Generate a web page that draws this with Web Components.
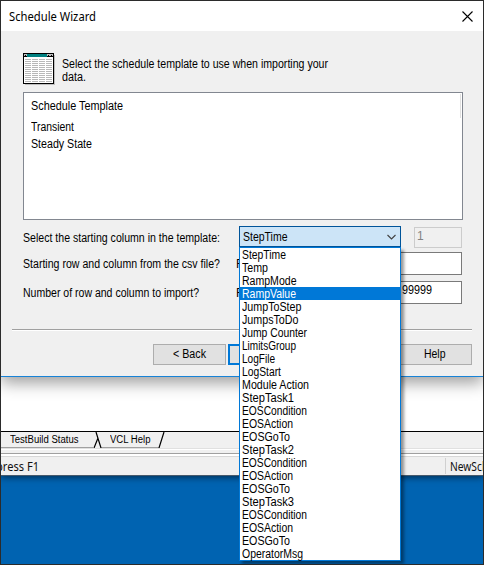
<!DOCTYPE html>
<html lang="en"><head><meta charset="utf-8"><title>Schedule Wizard</title>
<style>html,body{margin:0;background:#0063b1}</style></head><body><wizard-desktop></wizard-desktop>
<script>
const define=(name,html,ready)=>customElements.define(name,class extends HTMLElement{
  constructor(){super();this.attachShadow({mode:'open'}).innerHTML=html;}
  connectedCallback(){if(ready)ready.call(this,this.shadowRoot);}
});
// Text label condensed or widened to fill the width given in "w".
define('ui-text',`<style>:host{display:block;white-space:pre;flex:none}span{display:inline-block;transform-origin:0 0}</style><span><slot></slot></span>`,function(r){
  const w=parseFloat(this.getAttribute('w'));if(!w)return;
  const s=r.querySelector('span'),n=s.getBoundingClientRect().width;
  s.style.transform='scaleX('+w/n+')';
  s.style.marginRight=(w-n)+'px';
});
define('ui-field',`<style>:host{display:block;box-sizing:border-box;background:#fff;border:1px solid #7a7a7a;padding:1px 0 0 2px;line-height:15px}
:host([disabled]){background:#f0f0f0;border-color:#ccc;color:#838383}</style><slot></slot>`);
define('ui-button',`<style>:host{display:flex;box-sizing:border-box;height:21px;background:#e1e1e1;border:1px solid #adadad;justify-content:center;align-items:center;line-height:19px}
:host([primary]){border:2px solid #0078d7}</style><slot></slot>`);
define('template-list',`<style>:host{display:flex;box-sizing:border-box;width:440px;height:128px;border:1px solid #828790;background:#fff;justify-content:space-between;padding:1px 1px 0 7px}
.c{padding-top:4px;line-height:17px}.h{margin-bottom:4px}i{width:1px;height:24px;background:#e0e0e0}</style>
<div class="c"><ui-text class="h" w="92">Schedule Template</ui-text><ui-text w="43">Transient</ui-text><ui-text w="61">Steady State</ui-text></div><i></i>`);
define('table-icon',`<style>:host{display:block;width:33px;height:33px}svg{display:block}</style>
<svg width="33" height="33" shape-rendering="crispEdges"><path fill="#c0c0c0" d="M2 2h30v30H2z"/><path d="M0 0h31v31H0z"/><path fill="#fff" d="M1 4h29v26H1z"/><path fill="#c0c0c0" d="M1 1h29v2H1z"/><path fill="#008080" d="M4 1h20v3H4z"/><path d="M2 2h1v1h-1zM25 2h1v1h-1zM28 2h1v1h-1z"/>
<path stroke="#b8b8b8" stroke-dasharray="6 1" d="M2 6.5h27M2 8.5h27M2 10.5h27M2 12.5h27M2 14.5h27M2 16.5h27M2 18.5h27M2 20.5h27M2 22.5h27M2 24.5h27M2 26.5h27M2 28.5h27"/></svg>`);
const items=[['StepTime',44],['Temp',26],['RampMode',54.5],['RampValue',54],['JumpToStep',59.5],['JumpsToDo',56.5],['Jump Counter',65],['LimitsGroup',54],['LogFile',33],['LogStart',39],['Module Action',67],['StepTask1',52],['EOSCondition',65],['EOSAction',51],['EOSGoTo',48],['StepTask2',52],['EOSCondition',65],['EOSAction',51],['EOSGoTo',48],['StepTask3',52],['EOSCondition',65],['EOSAction',51],['EOSGoTo',48],['OperatorMsg',61]];
define('combo-menu',`<style>:host{display:block;box-sizing:border-box;width:162px;height:314px;background:#fff;border:1px solid #0078d7;box-shadow:3px 3px 3px rgba(0,0,0,.4)}
div{height:13px;line-height:15px;padding-left:2px}.on{background:#0078d7;color:#fff}</style>`+items.map((t,i)=>`<div class="${i==3?'on':''}"><ui-text w="${t[1]}">${t[0]}</ui-text></div>`).join(''));
define('combo-box',`<style>:host{display:block;position:relative;width:162px;height:21px}
.b{box-sizing:border-box;height:21px;border:1px solid #005499;background:#cce4f7;display:flex;justify-content:space-between;padding:2px 4px 0 3px;line-height:17px}
combo-menu{position:absolute;left:0;top:21px;z-index:5}svg{margin-top:5px}</style><div class="b"><ui-text w="44.5">StepTime</ui-text><svg width="9" height="7"><path d="M.5 1l4 4 4-4" fill="none" stroke="#404040" stroke-width="1.1"/></svg></div><combo-menu></combo-menu>`);
define('wizard-dialog',`<style>:host{display:flex;flex-direction:column;box-sizing:border-box;width:482px;height:376px;background:#f0f0f0;border-bottom:1px solid #1883d7;box-shadow:0 6px 15px rgba(0,0,0,.38);font:12px "Liberation Sans",sans-serif;color:#000}
.t{height:30px;background:#fff;display:flex;justify-content:space-between;align-items:center;box-sizing:border-box;padding:0 10px 0 8px;font:12px "Noto Sans",sans-serif;color:#000}
.i{display:flex;margin:22px 0 0 22px;height:39px}.i div{line-height:13px;margin:5px 0 0 6px}
template-list{margin-left:22px}.r{display:flex;margin-left:22px;line-height:15px}.r>.l{width:213px}
hr{border:0;margin:25px 11px 0;height:1px;background:#a0a0a0;border-bottom:1px solid #fff;flex:none}
.f{display:flex;margin:13px 11px 0 152px}</style>
<div class="t"><ui-text w="87">Schedule Wizard</ui-text><svg width="11" height="11"><path d="M.5.5l10 10M10.5.5l-10 10" stroke="#000" stroke-width="1.1"/></svg></div>
<div class="i"><table-icon></table-icon><div><ui-text w="266">Select the schedule template to use when importing your</ui-text><ui-text w="24">data.</ui-text></div></div>
<template-list></template-list>
<div class="r" style="margin-top:6px;height:26px"><ui-text class="l" style="width:216px;padding-top:5px" w="197">Select the starting column in the template:</ui-text><combo-box></combo-box><ui-field disabled style="width:48px;height:21px;margin:1px 0 0 13px">1</ui-field></div>
<div class="r" style="height:29px"><ui-text class="l" style="padding-top:5px" w="197">Starting row and column from the csv file?</ui-text><ui-text style="padding-top:5px;width:144px">R</ui-text><ui-field style="width:82px;height:23px"></ui-field></div>
<div class="r" style="height:23px"><ui-text class="l" style="padding-top:5px" w="176">Number of row and column to import?</ui-text><ui-text style="padding-top:5px;width:144px">R</ui-text><ui-field style="width:82px;height:23px;padding-left:21px"><ui-text w="30">99999</ui-text></ui-field></div>
<hr><div class="f"><ui-button style="width:73px"><ui-text w="33">&lt; Back</ui-text></ui-button><ui-button primary style="width:74px;margin-left:2px"></ui-button><ui-button style="width:74px;margin-left:auto"><ui-text w="21.5">Help</ui-text></ui-button></div>`);
define('app-window',`<style>:host{display:block;box-sizing:border-box;height:475px;background:#f0f0f0;font:11px "Liberation Sans",sans-serif;box-shadow:0 1px 7px rgba(0,0,0,.6);border-bottom:1px solid #47596b;overflow:hidden}
.w{height:430px;background:#fff;border-bottom:1px solid #000}.tabs{display:flex;height:16px;position:relative}.tabs svg{position:absolute;left:0;top:0}
.tabs ui-text{margin-left:9px;font-size:10px;line-height:16px;position:relative;color:#000}.tabs ui-text+ui-text{margin-left:31px}
.e{height:9px;background:linear-gradient(#e0e0e0 1px,#fff 1px 2px,#f0f0f0 2px 5px,#a0a0a0 5px 6px,#fff 6px 8px,#d7d7d7 8px)}
.s{display:flex;justify-content:space-between;height:18px;font:12px/20px "Noto Sans",sans-serif;color:#111}.s div{width:38px;overflow:hidden;border-left:1px solid #d0d0d0;height:16px;margin-top:1px;line-height:18px;box-sizing:border-box;padding-left:4px;display:flex}</style>
<div class="w"></div><div class="tabs"><svg width="170" height="16"><path d="M0 15.5h92M100 15.5h58" stroke="#a0a0a0"/><path d="M95 0l5 16H158L163 0z" fill="#f0f0f0"/><path d="M100 15.5h58" stroke="#a0a0a0"/><path d="M97 6l-4 10M95 0l5 16M163 0l-5 16" fill="none" stroke="#000" stroke-width="1.2"/></svg><ui-text w="68.500">TestBuild Status</ui-text><ui-text w="40.500">VCL Help</ui-text></div><div class="e"></div><div class="s"><ui-text style="margin-left:-5px" w="43">press F1</ui-text><div><ui-text w="65">NewSchedule</ui-text></div></div>`);
define('wizard-desktop',`<style>:host{display:block;position:relative;box-sizing:border-box;width:484px;height:565px;background:#0063b1;border:1px solid #2b2b2b;overflow:hidden}
wizard-dialog{position:absolute;left:0;top:0}</style><app-window></app-window><wizard-dialog></wizard-dialog>`);
</script></body></html>
